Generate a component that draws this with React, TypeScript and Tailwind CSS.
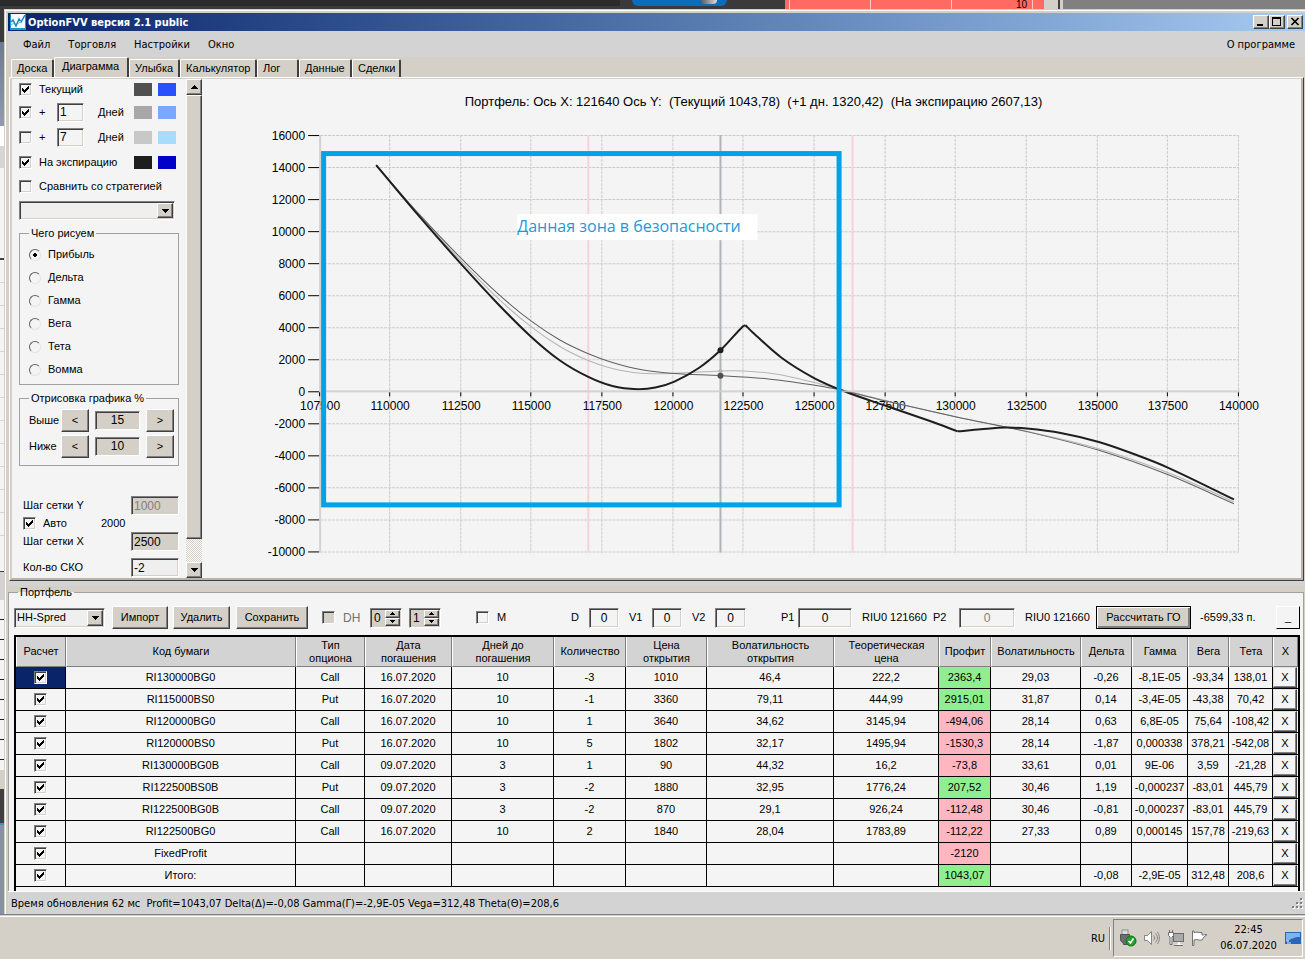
import React from 'react';

type Point = [number, number];

const sunken =
  'border border-t-[#808080] border-l-[#808080] border-b-white border-r-white shadow-[inset_1px_1px_0_#404040,inset_-1px_-1px_0_#d4d0c8]';
const raised =
  'border border-t-white border-l-white border-b-[#404040] border-r-[#404040] shadow-[inset_-1px_-1px_0_#808080] bg-[#d4d0c8]';
const tahoma = "font-['DejaVu_Sans_Condensed','DejaVu_Sans',sans-serif]";

const CheckBox: React.FC<{ id?: string; label?: string; checked?: boolean; disabled?: boolean }> = ({
  id,
  label,
  checked = false,
  disabled = false,
}) => (
  <span className="relative block w-[13px] h-[13px] shrink-0">
    <input
      id={id}
      type="checkbox"
      aria-label={label}
      defaultChecked={checked}
      disabled={disabled}
      className={`peer appearance-none block w-[13px] h-[13px] bg-[#f4f4f4] disabled:bg-[#d4d0c8] ${sunken}`}
    />
    <svg
      viewBox="0 0 13 13"
      shapeRendering="crispEdges"
      className="absolute inset-0 w-[13px] h-[13px] pointer-events-none hidden peer-checked:block"
    >
      <path d="M3 5h1v1h1v1h1v-1h1v-1h1v-1h1v-1h1v3h-1v1h-1v1h-1v1h-1v1h-1v-1h-1v-1h-1z" fill="#000" />
    </svg>
  </span>
);

const DropDown: React.FC<{ label: string; options: string[]; className: string }> = ({ label, options, className }) => (
  <div className={`relative shrink-0 ${className}`}>
    <select aria-label={label} className={`appearance-none w-full h-full pl-[2px] bg-[#efefef] ${sunken}`}>
      {options.map((option) => (
        <option key={option}>{option}</option>
      ))}
    </select>
    <span
      className={`absolute right-[2px] top-[2px] bottom-[2px] w-4 flex items-center justify-center pointer-events-none ${raised}`}
    >
      <svg width="7" height="4" viewBox="0 0 7 4" shapeRendering="crispEdges">
        <path d="M0 0h7L3.5 4z" />
      </svg>
    </span>
  </div>
);

const Spinner: React.FC<{ value: string; label: string }> = ({ value, label }) => (
  <div className={`w-8 h-5 flex p-px bg-[#d4d0c8] ${sunken}`}>
    <input aria-label={label} defaultValue={value} className="w-[13px] min-w-0 pl-[2px] bg-transparent text-xs" />
    <span className="flex-1 flex flex-col">
      {['M0 3h5L2.5 0z', 'M0 0h5L2.5 3z'].map((d) => (
        <button key={d} aria-label={label} className={`flex-1 flex items-center justify-center ${raised}`}>
          <svg width="5" height="3" viewBox="0 0 5 3" shapeRendering="crispEdges">
            <path d={d} />
          </svg>
        </button>
      ))}
    </span>
  </div>
);

/* ---------- Desktop behind the window ---------- */

const DesktopTop: React.FC = () => (
  <div className="h-[9px] flex bg-[#3a3a3a]">
    <div className="w-[620px] h-[6px] bg-[#2b2b2b]" />
    <div className="ml-3 w-[95px] h-[6px] rounded-b-lg bg-[#0a6cbd] flex justify-end pr-[10px]">
      <span className="w-4 h-[4px] rounded-b-lg bg-linear-to-r from-[#5c5c5c] to-[#e0dcdc]" />
    </div>
    <div className="ml-auto w-[259px] bg-[#ff6a62] flex">
      <span className="w-[5px] border-r border-[#ffc9c5]" />
      <span className="w-[81px] border-r border-[#ffc9c5]" />
      <span className="w-[81px] border-r border-[#ffc9c5]" />
      <span className="w-[81px] border-r border-[#ffc9c5] pr-[5px] text-right text-[10px] leading-[9px]">10</span>
    </div>
    <span className="w-4 bg-[#d4d0c8] border-r-2 border-[#404040]" />
    <span className="w-[3px] bg-[#d4d0c8]" />
    <span className="w-[242px] bg-[#808080]" />
  </div>
);

const DesktopLeft: React.FC = () => (
  <div className="w-1 shrink-0 flex flex-col bg-[#f4f4f4] overflow-hidden">
    <span className="h-[33px] bg-[#3a3a3a]" />
    <span className="h-[84px] bg-linear-to-b from-[#6f7996] to-[#9299b2]" />
    <span className="h-5 bg-white" />
    <span className="h-[22px] bg-[#d6d6d6]" />
    <span className="h-[92px] border-b-2 border-[#404040]" />
    <span className="h-[280px] bg-[repeating-linear-gradient(#f4f4f4_0_22px,#d4d4d4_22px_23px)]" />
    <span className="h-8 border-b border-[#404040]" />
    <span className="h-7 bg-[#d3d3d3]" />
    <span className="h-[170px] bg-[repeating-linear-gradient(#f4f4f4_0_19px,#202020_19px_20px)]" />
    <span className="h-[19px] bg-[#d4d0c8]" />
    <span className="h-[34px] bg-[#404040]" />
    <span className="flex-1 bg-[#8890a8] border-t-2 border-[#3d8fd0]" />
  </div>
);

/* ---------- Title bar, menu, tabs ---------- */

const TitleBar: React.FC = () => (
  <div className="h-[18px] flex items-center pl-[2px] pr-[2px] bg-linear-to-r from-[#0a246a] to-[#a6caf0]">
    <svg width="16" height="16" viewBox="0 0 16 16">
      <rect width="16" height="16" fill="#1c96d4" />
      <rect x="1" y="0" width="14" height="14" fill="#f6fbff" />
      <path d="M1 8l2-2 3 6 3-7 2 3 4-7" fill="none" stroke="#1685c4" strokeWidth="1.5" />
      <path d="M1 11l3-2M8 10l3-3" fill="none" stroke="#7cc4ea" />
    </svg>
    <h1 className={`ml-[2px] text-[11px] font-bold text-white ${tahoma}`}>OptionFVV версия 2.1 public</h1>
    <div className="ml-auto flex">
      <button aria-label="Свернуть" className={`w-4 h-[14px] ${raised}`}>
        <svg width="14" height="12" viewBox="0 0 14 12" shapeRendering="crispEdges">
          <path d="M3 8h6v2H3z" />
        </svg>
      </button>
      <button aria-label="Развернуть" className={`w-4 h-[14px] ${raised}`}>
        <svg width="14" height="12" viewBox="0 0 14 12" shapeRendering="crispEdges">
          <path d="M2 1h9v9H2zM3 3v6h7V3z" fillRule="evenodd" />
        </svg>
      </button>
      <button aria-label="Закрыть" className={`ml-[2px] w-4 h-[14px] ${raised}`}>
        <svg width="14" height="12" viewBox="0 0 14 12">
          <path d="M3.5 2l7 7M10.500 2l-7 7" stroke="#000" strokeWidth="1.7" />
        </svg>
      </button>
    </div>
  </div>
);

const menu = ['Файл', 'Торговля', 'Настройки', 'Окно'];

const MenuBar: React.FC = () => (
  <nav className={`h-[26px] flex items-center gap-[18px] pl-[15px] pr-[10px] bg-[#d3d3d3] ${tahoma}`}>
    {menu.map((item) => (
      <button key={item}>{item}</button>
    ))}
    <button className="ml-auto">О программе</button>
  </nav>
);

const tabs = [
  { name: 'Доска', width: 'w-[43px]' },
  { name: 'Диаграмма', width: 'w-[75px]' },
  { name: 'Улыбка', width: 'w-[51px]' },
  { name: 'Калькулятор', width: 'w-[77px]' },
  { name: 'Лог', width: 'w-[42px]' },
  { name: 'Данные', width: 'w-[53px]' },
  { name: 'Сделки', width: 'w-[49px]' },
];

const Tabs: React.FC = () => (
  <div role="tablist" className="h-5 flex items-end pl-[3px]">
    {tabs.map((tab, idx) => (
      <button
        key={tab.name}
        role="tab"
        aria-selected={idx === 1}
        className={`${tab.width} pl-[5px] text-left whitespace-nowrap border-t border-l border-r-2 border-t-white border-l-white border-r-[#404040] rounded-t-xs ${
          idx === 1 ? 'h-5 pb-[2px] pl-[7px]' : 'h-[18px]'
        }`}
      >
        {tab.name}
      </button>
    ))}
  </div>
);

/* ---------- Left settings column ---------- */

const curves = [
  { label: 'Текущий', checked: true, row: 'h-[21px]', a: 'bg-[#505050]', b: 'bg-[#2850ff]' },
  { label: '+', days: '1', checked: true, row: 'h-6', a: 'bg-[#a8a8a8]', b: 'bg-[#78a8ff]' },
  { label: '+', days: '7', checked: false, row: 'h-[26px]', a: 'bg-[#c8c8c8]', b: 'bg-[#a8dcff]' },
  { label: 'На экспирацию', checked: true, row: 'h-6', a: 'bg-[#1e1e1e]', b: 'bg-[#0000c8]' },
];

const greeks = ['Прибыль', 'Дельта', 'Гамма', 'Вега', 'Тета', 'Вомма'];

const SidePanel: React.FC = () => (
  <div className="w-[190px] shrink-0 flex">
    <div className="w-[174px] pl-[7px] pr-[7px]">
      {curves.map((curve, idx) => (
        <div key={idx} className={`flex items-center ${curve.row}`}>
          <CheckBox id={`curve-${idx}`} checked={curve.checked} />
          <label htmlFor={`curve-${idx}`} className={`ml-[7px] ${curve.days ? 'w-[18px]' : 'w-[95px]'}`}>
            {curve.label}
          </label>
          {curve.days && (
            <>
              <input
                id={`days-${idx}`}
                defaultValue={curve.days}
                className={`w-[27px] h-[19px] pl-[2px] text-xs ${sunken}`}
              />
              <label htmlFor={`days-${idx}`} className="w-[50px] pl-[14px]">
                Дней
              </label>
            </>
          )}
          <span className={`w-[18px] h-[13px] ${curve.a}`} />
          <span className={`ml-[6px] w-[18px] h-[13px] ${curve.b}`} />
        </div>
      ))}
      <div className="h-6 flex items-center">
        <CheckBox id="compare" />
        <label htmlFor="compare" className="ml-[7px] whitespace-nowrap">
          Сравнить со стратегией
        </label>
      </div>
      <DropDown label="Стратегия" options={['']} className="mt-[3px] w-[156px] h-[19px]" />

      <fieldset className="mt-[7px] border border-[#a0a0a0] pl-[9px] pt-1 pb-[3px]">
        <legend className="px-[2px] leading-3">Чего рисуем</legend>
        {greeks.map((name, idx) => (
          <label key={name} className="h-[23px] flex items-center gap-[7px]">
            <input
              type="radio"
              name="greek"
              defaultChecked={idx === 0}
              className="appearance-none w-3 h-3 rounded-full border border-t-[#606060] border-l-[#606060] border-b-[#e4e4e4] border-r-[#e4e4e4] bg-[#f4f4f4] checked:bg-[radial-gradient(circle,#000_2px,#f4f4f4_2px)]"
            />
            {name}
          </label>
        ))}
      </fieldset>

      <fieldset className="mt-[7px] border border-[#a0a0a0] pl-[9px] pt-1 pb-[7px] flex flex-col gap-[2px]">
        <legend className="px-[2px] leading-3">Отрисовка графика %</legend>
        {[
          ['Выше', '15'],
          ['Ниже', '10'],
        ].map(([name, value]) => (
          <div key={name} className="h-6 flex items-center">
            <label htmlFor={name} className="w-8">
              {name}
            </label>
            <button className={`w-7 h-[23px] ${raised}`}>&lt;</button>
            <input
              id={name}
              defaultValue={value}
              className={`ml-[6px] mr-[6px] w-[45px] h-[19px] text-center text-xs bg-[#d4d0c8] ${sunken}`}
            />
            <button className={`w-7 h-[23px] ${raised}`}>&gt;</button>
          </div>
        ))}
      </fieldset>

      <div className="mt-[30px] pl-1 h-[19px] flex items-center justify-between">
        <label htmlFor="stepY">Шаг сетки Y</label>
        <input
          id="stepY"
          disabled
          defaultValue="1000"
          className={`w-12 h-[19px] pl-[2px] text-xs text-[#808080] bg-[#d4d0c8] ${sunken}`}
        />
      </div>
      <div className="h-4 pl-1 flex items-center">
        <CheckBox id="auto" checked />
        <label htmlFor="auto" className="ml-[7px] w-[58px]">
          Авто
        </label>
        <span>2000</span>
      </div>
      <div className="mt-px pl-1 h-[19px] flex items-center justify-between">
        <label htmlFor="stepX">Шаг сетки X</label>
        <input id="stepX" defaultValue="2500" className={`w-12 h-[19px] pl-[2px] text-xs bg-[#d4d0c8] ${sunken}`} />
      </div>
      <div className="mt-[7px] pl-1 h-[19px] flex items-center justify-between">
        <label htmlFor="sko">Кол-во СКО</label>
        <input id="sko" defaultValue="-2" className={`w-12 h-[19px] pl-[2px] text-xs bg-[#efefef] ${sunken}`} />
      </div>
    </div>

    {/* Scroll bar */}
    <div className="w-4 flex flex-col bg-[repeating-conic-gradient(#d4d0c8_0_25%,#fff_0_50%)] bg-[length:2px_2px]">
      <button aria-label="Вверх" className={`h-4 flex items-center justify-center ${raised}`}>
        <svg width="7" height="4" viewBox="0 0 7 4" shapeRendering="crispEdges">
          <path d="M0 4h7L3.5 0z" />
        </svg>
      </button>
      <div className={`flex-1 mb-[23px] ${raised}`} />
      <button aria-label="Вниз" className={`h-4 flex items-center justify-center ${raised}`}>
        <svg width="7" height="4" viewBox="0 0 7 4" shapeRendering="crispEdges">
          <path d="M0 0h7L3.5 4z" />
        </svg>
      </button>
    </div>
  </div>
);

/* ---------- Chart ---------- */

// Catmull-Rom spline through the points, written as cubic segments
const spline = (pts: Point[]) => {
  let d = `M${pts[0][0]} ${pts[0][1]}`;
  for (let i = 0; i < pts.length - 1; i++) {
    const p0 = pts[i - 1] ?? pts[i];
    const p1 = pts[i];
    const p2 = pts[i + 1];
    const p3 = pts[i + 2] ?? p2;
    const t = (p2[0] - p1[0]) / 3;
    const m1 = (p2[1] - p0[1]) / (p2[0] - p0[0]);
    const m2 = (p3[1] - p1[1]) / (p3[0] - p1[0]);
    d += `C${p1[0] + t} ${p1[1] + m1 * t} ${p2[0] - t} ${p2[1] - m2 * t} ${p2[0]} ${p2[1]}`;
  }
  return d;
};

const expiry: Point[][] = [
  [[376, 165], [418, 215], [461, 264], [497, 303], [531, 336.7], [560, 360.5], [588, 376.7], [612, 385.8], [637, 389], [655, 387.3], [674, 381.3], [698, 368], [720, 350], [742, 326.5], [745, 325]],
  [[745, 325], [752, 332], [781, 357.5], [814, 378], [845, 391.5], [885, 405.5], [930, 421], [957, 431]],
  [[957, 431], [980, 429], [1005, 427.3], [1026, 428.3], [1060, 432.7], [1098, 441.7], [1133, 453.7], [1168, 467.7], [1233, 499]],
];
const current: Point[] = [[376, 165], [418, 213], [461, 258.3], [497, 293], [531, 321], [560, 340], [588, 353.5], [612, 362.3], [640, 369.3], [674, 373.3], [720, 375.3], [766, 378.5], [814, 385], [838, 389.3], [885, 400.7], [957, 417], [1026, 431.3], [1098, 450], [1168, 474.7], [1233, 503.3]];
const nextDay: Point[] = [[376, 165], [418, 214], [461, 261], [497, 297.5], [531, 326.7], [560, 346.5], [588, 360.3], [612, 368.3], [640, 373], [674, 373], [720, 370.7], [743, 370.7], [777, 374], [814, 382.3], [838, 388.7], [885, 400.3], [957, 417], [1026, 431], [1098, 448.5], [1168, 472.7], [1233, 501.5]];

const yLabels = Array.from({ length: 14 }, (_, i) => 16000 - i * 2000);
const xLabels = Array.from({ length: 14 }, (_, i) => 107500 + i * 2500);
const toX = (v: number) => Math.round(319.5 + ((v - 107500) / 2500) * 70.65) - 0.5;
const toY = (v: number) => 391.5 - (v / 2000) * 32;

const Chart: React.FC = () => (
  <div className="flex-1 min-w-0">
    <svg viewBox="202 79 1098 499" className="block w-full h-auto" fontFamily="'Liberation Sans', sans-serif">
      <text x="753" y="106" textAnchor="middle" fontSize="13" className="whitespace-pre">
        {'Портфель: Ось X: 121640 Ось Y:  (Текущий 1043,78)  (+1 дн. 1320,42)  (На экспирацию 2607,13)'}
      </text>
      <g stroke="#cbcbcb" strokeDasharray="3 1">
        {yLabels.map((v) => (
          <path key={v} d={`M320 ${toY(v)}H1238`} />
        ))}
        {xLabels.slice(1).map((v) => (
          <path key={v} d={`M${toX(v)} 135V552`} />
        ))}
      </g>
      <path d="M320 135V552" stroke="#d3d3d3" strokeWidth="2" />
      <path d="M588 135V552" stroke="#f5d3d8" strokeWidth="2" />
      <path d="M852 135V552" stroke="#f5d3d8" strokeWidth="2" />
      <path d="M720 135V552" stroke="#b0b5b8" strokeWidth="2" />
      <g stroke="#000">
        {yLabels.map((v) => (
          <path key={v} d={`M308 ${toY(v)}H319`} />
        ))}
        {xLabels.map((v) => (
          <path key={v} d={`M${toX(v)} 392V396`} />
        ))}
      </g>
      <g fontSize="12">
        {yLabels.map((v) => (
          <text key={v} x="305" y={toY(v) + 4} textAnchor="end">
            {v}
          </text>
        ))}
        {xLabels.map((v) => (
          <text key={v} x={toX(v) + 0.5} y="410" textAnchor="middle">
            {v}
          </text>
        ))}
      </g>
      <g fill="none">
        <path d={spline(nextDay)} stroke="#b4b4b4" />
        <path d={spline(current)} stroke="#606060" />
        {expiry.map((part, idx) => (
          <path key={idx} d={spline(part)} stroke="#1e1e1e" strokeWidth="2" />
        ))}
      </g>
      <path d="M320 391H1239" stroke="#d0d0d0" strokeWidth="2" strokeOpacity="0.8" />
      <circle cx="720" cy="370.700" r="2" fill="#b4b4b4" />
      <circle cx="720" cy="375.500" r="3" fill="#505050" />
      <circle cx="720" cy="350" r="3" fill="#1e1e1e" />
      <rect x="323.5" y="153.5" width="515" height="351" fill="none" stroke="#00a2e8" strokeWidth="5" />
      <rect x="517" y="214" width="240" height="26" fill="#fff" />
      <text x="517" y="232" fontSize="16" fontWeight="500" fill="#1a9bd7" fontFamily="'Open Sans', sans-serif">
        Данная зона в безопасности
      </text>
    </svg>
  </div>
);

/* ---------- Portfolio ---------- */

const columns = [
  { title: 'Расчет', width: 'w-[50px]' },
  { title: 'Код бумаги', width: '' },
  { title: 'Тип опциона', width: 'w-[69px]' },
  { title: 'Дата погашения', width: 'w-[87px]' },
  { title: 'Дней до погашения', width: 'w-[102px]' },
  { title: 'Количество', width: 'w-[72px]' },
  { title: 'Цена открытия', width: 'w-[81px]' },
  { title: 'Волатильность открытия', width: 'w-[127px]' },
  { title: 'Теоретическая цена', width: 'w-[105px]' },
  { title: 'Профит', width: 'w-[52px]' },
  { title: 'Волатильность', width: 'w-[90px]' },
  { title: 'Дельта', width: 'w-[51px]' },
  { title: 'Гамма', width: 'w-[56px]' },
  { title: 'Вега', width: 'w-[41px]' },
  { title: 'Тета', width: 'w-[44px]' },
  { title: 'X', width: 'w-[25px]' },
];

const rows = [
  ['RI130000BG0', 'Call', '16.07.2020', '10', '-3', '1010', '46,4', '222,2', '2363,4', '29,03', '-0,26', '-8,1E-05', '-93,34', '138,01'],
  ['RI115000BS0', 'Put', '16.07.2020', '10', '-1', '3360', '79,11', '444,99', '2915,01', '31,87', '0,14', '-3,4E-05', '-43,38', '70,42'],
  ['RI120000BG0', 'Call', '16.07.2020', '10', '1', '3640', '34,62', '3145,94', '-494,06', '28,14', '0,63', '6,8E-05', '75,64', '-108,42'],
  ['RI120000BS0', 'Put', '16.07.2020', '10', '5', '1802', '32,17', '1495,94', '-1530,3', '28,14', '-1,87', '0,000338', '378,21', '-542,08'],
  ['RI130000BG0B', 'Call', '09.07.2020', '3', '1', '90', '44,32', '16,2', '-73,8', '33,61', '0,01', '9E-06', '3,59', '-21,28'],
  ['RI122500BS0B', 'Put', '09.07.2020', '3', '-2', '1880', '32,95', '1776,24', '207,52', '30,46', '1,19', '-0,000237', '-83,01', '445,79'],
  ['RI122500BG0B', 'Call', '09.07.2020', '3', '-2', '870', '29,1', '926,24', '-112,48', '30,46', '-0,81', '-0,000237', '-83,01', '445,79'],
  ['RI122500BG0', 'Call', '16.07.2020', '10', '2', '1840', '28,04', '1783,89', '-112,22', '27,33', '0,89', '0,000145', '157,78', '-219,63'],
  ['FixedProfit', '', '', '', '', '', '', '', '-2120', '', '', '', '', ''],
  ['Итого:', '', '', '', '', '', '', '', '1043,07', '', '-0,08', '-2,9E-05', '312,48', '208,6'],
];

const PROFIT = 8;

const field = `h-5 text-center text-xs bg-[#f4f4f4] ${sunken}`;

const Toolbar: React.FC = () => (
  <div className="h-[37px] flex items-center pl-[5px] pr-[3px] pt-[2px] whitespace-nowrap">
    <DropDown label="Портфель" options={['HH-Spred']} className="w-[91px] h-5" />
    <button className={`ml-[7px] w-14 h-[23px] ${raised}`}>Импорт</button>
    <button className={`ml-[5px] w-[57px] h-[23px] ${raised}`}>Удалить</button>
    <button className={`ml-[6px] mr-[14px] w-[72px] h-[23px] ${raised}`}>Сохранить</button>
    <CheckBox id="dh" disabled />
    <label htmlFor="dh" className="pl-2 w-[35px] text-xs text-[#707070]">
      DH
    </label>
    <Spinner value="0" label="DH от" />
    <span className="w-[7px]" />
    <Spinner value="1" label="DH до" />
    <span className="w-[35px]" />
    <CheckBox id="m" />
    <label htmlFor="m" className="pl-2 w-[82px]">
      M
    </label>
    <label htmlFor="d" className="w-[18px]">
      D
    </label>
    <input id="d" defaultValue="0" className={`w-[30px] ${field}`} />
    <label htmlFor="v1" className="pl-[10px] w-[33px]">
      V1
    </label>
    <input id="v1" defaultValue="0" className={`w-[30px] ${field}`} />
    <label htmlFor="v2" className="pl-[10px] w-[33px]">
      V2
    </label>
    <input id="v2" defaultValue="0" className={`w-[31px] ${field}`} />
    <label htmlFor="p1" className="ml-[35px] w-[17px]">
      P1
    </label>
    <input id="p1" defaultValue="0" className={`w-[54px] ${field}`} />
    <span className="pl-[10px] w-[81px]">RIU0 121660</span>
    <label htmlFor="p2" className="w-[26px]">
      P2
    </label>
    <input id="p2" defaultValue="0" disabled className={`w-14 text-[#808080] ${field}`} />
    <span className="pl-[10px] w-[81px]">RIU0 121660</span>
    <button className="w-[95px] h-[23px] border border-black bg-[#d4d0c8] shadow-[inset_1px_1px_0_#fff,inset_-2px_-2px_0_#808080]">
      Рассчитать ГО
    </button>
    <span className="pl-[9px]">-6599,33 п.</span>
    <button className="ml-auto w-6 h-[23px] border border-t-white border-l-white border-b-black border-r-black bg-[#f4f4f4]">
      _
    </button>
  </div>
);

const PositionsTable: React.FC = () => (
  <div className="ml-[5px] mr-[3px] border-2 border-b-0 border-black pb-1">
    <table className="w-full table-fixed border-separate border-spacing-0 text-center">
      <thead>
        <tr className="h-[30px] bg-[#d3d3d3]">
          {columns.map((col, idx) => (
            <th
              key={idx}
              className={`p-0 px-[2px] h-[30px] font-normal leading-[13px] border-b border-r border-l border-b-[#808080] border-r-[#808080] border-l-white ${col.width}`}
            >
              {col.title}
            </th>
          ))}
        </tr>
      </thead>
      <tbody>
        {rows.map((row, r) => (
          <tr key={r}>
            <td className={`p-0 h-[22px] border-r border-b border-black ${r === 0 ? 'bg-[#0a246a]' : ''}`}>
              <div className="flex justify-center">
                <CheckBox label={row[0]} checked />
              </div>
            </td>
            {row.map((cell, c) => (
              <td
                key={c}
                className={`p-0 h-[22px] whitespace-nowrap border-r border-b border-black ${
                  c === PROFIT ? (cell.startsWith('-') ? 'bg-[#ffb6c1]' : 'bg-[#90ee90]') : ''
                }`}
              >
                {cell}
              </td>
            ))}
            <td className="p-0 h-[22px] border-b border-black">
              <button className="block w-6 h-[21px] border border-t-[#e0e0e0] border-l-[#e0e0e0] border-b-[#404040] border-r-[#404040] shadow-[inset_-1px_-1px_0_#808080]">
                X
              </button>
            </td>
          </tr>
        ))}
      </tbody>
    </table>
  </div>
);

/* ---------- Taskbar ---------- */

const TaskBar: React.FC = () => (
  <footer className={`h-[42px] flex items-center justify-end pr-[2px] bg-[#d4d0c8] ${tahoma}`}>
    <span className="mr-[4px]">RU</span>
    <span className="w-[2px] h-[23px] mr-[2px] border-l border-l-[#808080] border-r border-r-white" />
    <div className="h-[38px] w-[190px] flex items-center pl-[5px] border border-t-[#808080] border-l-[#808080] border-b-white border-r-white">
      <svg width="18" height="18" viewBox="0 0 18 18">
        <rect x="3" y="1" width="6" height="5" fill="#d8dde0" stroke="#8a9094" />
        <path d="M1.500 5.500h9v6c0 2-2 2-2 4h-4c0-3-3-2-3-5z" fill="#6c6f71" stroke="#505254" />
        <circle cx="12" cy="12" r="5" fill="#27a02b" stroke="#137017" />
        <path d="M9.500 12l2 2 3-4.500" fill="none" stroke="#fff" strokeWidth="1.6" />
      </svg>
      <svg className="ml-[6px]" width="17" height="16" viewBox="0 0 17 16" fill="none" stroke="#858585">
        <path d="M1.500 5.500h3l4-4v13l-4-4h-3z" fill="#fff" />
        <path d="M10.500 5.500c1.500 1.500 1.500 3.500 0 5M12.500 3.500c2.600 2.600 2.600 6.400 0 9M14.500 2c2.500 3.500 2.500 8.500 0 12" />
      </svg>
      <svg className="ml-[7px]" width="18" height="16" viewBox="0 0 18 16" stroke="#6c6c6c">
        <rect x="6.500" y="3.500" width="10" height="8" fill="#aaa" />
        <path d="M8 15.500h8M12 12v3" fill="none" stroke="#fff" strokeWidth="2" />
        <path d="M7 15.500h9" fill="none" />
        <path d="M1.500 2.500h5v3l-1.500 1.500v7.500h-2V7L1.500 5.500zM2.500 0v2M5.500 0v2" fill="#fff" />
      </svg>
      <svg className="ml-[6px]" width="17" height="16" viewBox="0 0 17 16" fill="#fff" stroke="#707070">
        <path d="M1.500 1v14.500h1.500V10c4-1.500 4.500 1 8 0l2-3 3-2.500c-2 .5-3.500 0-5 .5V2.500c-3 .5-5-1-8 0V1z" />
      </svg>
      <div className="flex-1 pl-1 text-center leading-4">
        <div>22:45</div>
        <div>06.07.2020</div>
      </div>
      <svg className="mr-px" width="16" height="13" viewBox="0 0 16 13">
        <rect width="16" height="12" fill="#2a66b8" />
        <path d="M1 1h14v4c-6 0-9 2-14 5z" fill="#7db4ec" />
        <path d="M2 11h4M2 9h2" stroke="#d8ecff" />
      </svg>
    </div>
  </footer>
);

export default function App() {
  return (
    <div className="min-h-screen flex flex-col bg-[#d4d0c8] text-[11px] leading-[13px] text-black font-['Liberation_Sans',Arial,sans-serif]">
      <DesktopTop />
      <div className="flex">
        <DesktopLeft />
        <div className="flex-1 min-w-0 border-t border-l border-[#d4d0c8]">
          <div className="border-t border-l border-white pt-[2px] pl-[2px]">
            <TitleBar />
            <MenuBar />
            <Tabs />
            <div className="ml-px mr-px border border-t-white border-l-white border-b-[#404040] border-r-[#404040]">
              <div className="border-t border-l-2 border-b-2 border-r-2 border-t-[#d4d0c8] border-l-[#d4d0c8] border-b-[#b8b4ac] border-r-[#b8b4ac] bg-[#f4f4f4] flex">
                <SidePanel />
                <Chart />
              </div>
            </div>
            <div className="h-[5px] bg-[#d3d3d3]" />
            <fieldset className="min-w-0 mr-px border border-b-0 border-[#a0a0a0] bg-[#f4f4f4]">
              <legend className="ml-[9px] px-[2px] leading-3">Портфель</legend>
              <Toolbar />
              <PositionsTable />
            </fieldset>
            <div
              className={`h-[23px] flex items-center justify-between pl-[3px] pr-px bg-[#d3d3d3] border-t border-white whitespace-pre ${tahoma}`}
            >
              <span>{'Время обновления 62 мс  Profit=1043,07 Delta(Δ)=-0,08 Gamma(Γ)=-2,9E-05 Vega=312,48 Theta(Θ)=208,6'}</span>
              <svg className="self-end mb-1" width="12" height="12" viewBox="0 0 12 12" shapeRendering="crispEdges">
                <path d="M9 1h2v2H9zM5 5h2v2H5zM9 5h2v2H9zM1 9h2v2H1zM5 9h2v2H5zM9 9h2v2H9z" fill="#fff" />
                <path d="M8 0h2v2H8zM4 4h2v2H4zM8 4h2v2H8zM0 8h2v2H0zM4 8h2v2H4zM8 8h2v2H8z" fill="#808080" />
              </svg>
            </div>
          </div>
        </div>
      </div>
      <div className="h-[3px] border-t border-t-[#808080] border-b border-b-white" />
      <TaskBar />
    </div>
  );
}
